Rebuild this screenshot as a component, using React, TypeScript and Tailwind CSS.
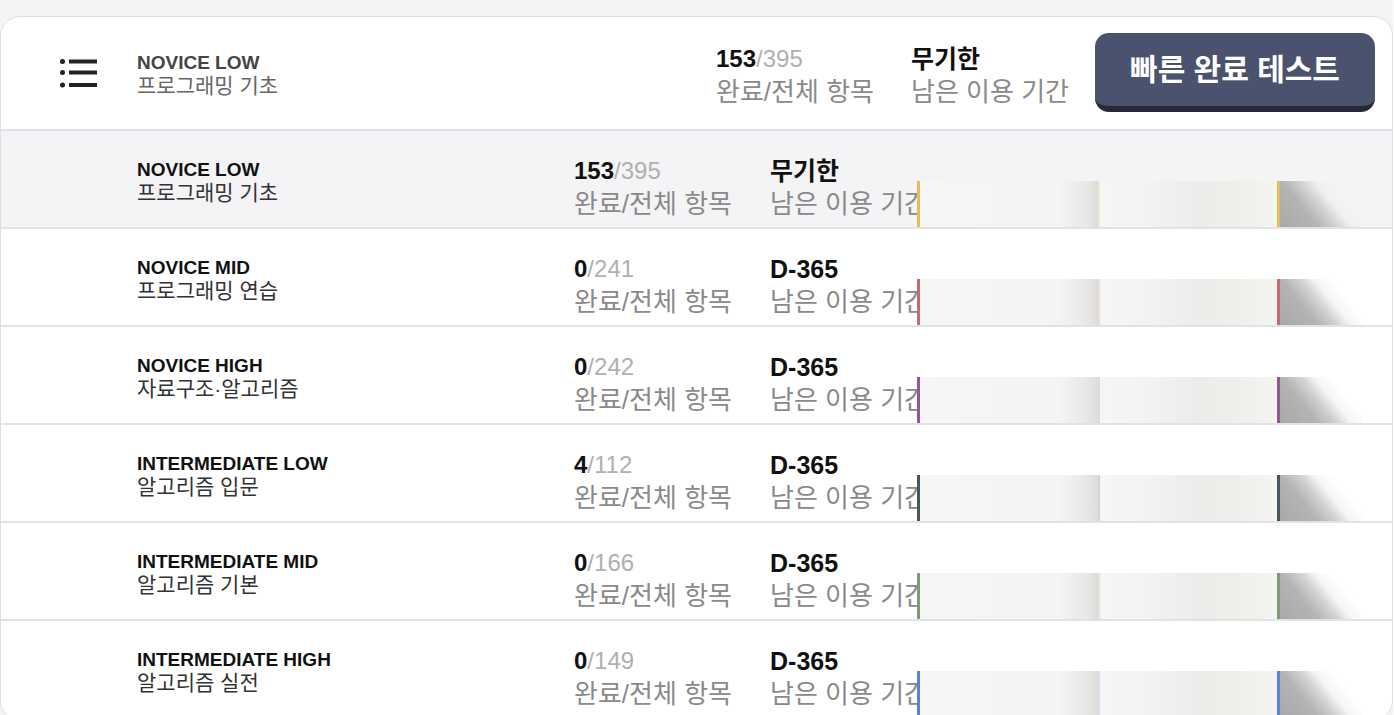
import React from "react"

interface Course {
  level: string
  title: string
  done: number
  total: number
  remain: string
  color: string
  active?: boolean
}

const courses: Course[] = [
  { level: "NOVICE LOW", title: "프로그래밍 기초", done: 153, total: 395, remain: "무기한", color: "#e2bd5c", active: true },
  { level: "NOVICE MID", title: "프로그래밍 연습", done: 0, total: 241, remain: "D-365", color: "#c46a70" },
  { level: "NOVICE HIGH", title: "자료구조·알고리즘", done: 0, total: 242, remain: "D-365", color: "#8a5a92" },
  { level: "INTERMEDIATE LOW", title: "알고리즘 입문", done: 4, total: 112, remain: "D-365", color: "#46575d" },
  { level: "INTERMEDIATE MID", title: "알고리즘 기본", done: 0, total: 166, remain: "D-365", color: "#7f9a74" },
  { level: "INTERMEDIATE HIGH", title: "알고리즘 실전", done: 0, total: 149, remain: "D-365", color: "#5d7fd6" },
]

const font = { fontFamily: '"Liberation Sans", "Noto Sans CJK KR", sans-serif' }

function MenuIcon() {
  return (
    <svg width="38" height="30" viewBox="0 0 38 30" className="shrink-0">
      <circle cx="2.5" cy="3.5" r="2.5" fill="#222" />
      <circle cx="2.5" cy="14.5" r="2.5" fill="#222" />
      <circle cx="2.5" cy="27" r="2.5" fill="#222" />
      <rect x="9" y="1.5" width="28" height="4" fill="#222" />
      <rect x="9" y="12.5" width="28" height="4" fill="#222" />
      <rect x="9" y="25" width="28" height="4" fill="#222" />
    </svg>
  )
}

function Book({ color }: { color: string }) {
  return (
    <div className="absolute left-[916px] bottom-0 h-[46px] flex">
      <div className="w-[3px] h-full" style={{ backgroundColor: color }} />
      <div className="w-[178px] h-full bg-[linear-gradient(to_right,#f6f6f4_0%,#f4f4f2_78%,#e9e9e7_92%,#dcdcda_100%)]" />
      <div className="w-[2px] h-full" style={{ backgroundColor: color, opacity: 0.25 }} />
      <div className="w-[177px] h-full bg-[linear-gradient(to_right,#f6f6f4_0%,#f3f3f1_25%,#ececea_55%,#efefeb_80%,#f4f4f0_100%)]" />
      <div className="w-[3px] h-full" style={{ backgroundColor: color }} />
      <div className="w-[82px] h-full bg-[linear-gradient(51deg,#a8a8a8_0%,#b4b4b4_32%,#d2d2d2_48%,rgba(236,236,236,0.5)_60%,rgba(255,255,255,0)_75%)]" />
    </div>
  )
}

function Stat({ top, label, bold }: { top: React.ReactNode; label: string; bold?: boolean }) {
  return (
    <div className="flex flex-col">
      <div className={`leading-[28px] text-[#111] ${bold ? "text-[25px] font-bold" : "text-[24px]"}`}>{top}</div>
      <div className="mt-[5px] text-[26px] leading-[28px] text-[#8a8a8a]">{label}</div>
    </div>
  )
}

function Progress({ done, total }: { done: number; total: number }) {
  return (
    <>
      <span className="font-bold">{done}</span>
      <span className="text-[#b0b0b0]">/{total}</span>
    </>
  )
}

export default function App() {
  const current = courses[0]
  return (
    <div className="min-h-screen bg-[#f4f4f6] pt-4 mr-px" style={font}>
      <div className="bg-white border border-[#dedee3] rounded-[20px] overflow-hidden">
        <div className="h-[114px] flex items-center pl-[59px] pr-[17px] border-b-2 border-[#e2e2e6]">
          <MenuIcon />
          <div className="ml-[39px] mt-[2px] flex flex-col">
            <div className="text-[19px] leading-[22px] font-bold text-[#444]">{current.level}</div>
            <div className="text-[21px] leading-[23px] text-[#666]">{current.title}</div>
          </div>
          <div className="ml-auto w-[195px] pt-[5px]">
            <Stat top={<Progress done={current.done} total={current.total} />} label="완료/전체 항목" />
          </div>
          <div className="w-[184px] pt-[5px]">
            <Stat top={current.remain} label="남은 이용 기간" bold />
          </div>
          <button className="w-[280px] h-[79px] mb-[1px] rounded-[14px] bg-[#4a526e] border-b-[6px] border-[#262a36] text-white text-[30px] font-bold">
            빠른 완료 테스트
          </button>
        </div>
        {courses.map((c) => (
          <div
            key={c.level}
            className={`relative h-[98px] flex items-start pt-[26px] pl-[136px] border-b-2 border-[#e2e2e6] ${c.active ? "bg-[#f4f4f6]" : "bg-white"}`}
          >
            <div className="w-[437px] mt-[2px] flex flex-col">
              <div className="text-[19px] leading-[22px] font-bold text-[#111]">{c.level}</div>
              <div className="text-[21px] leading-[23px] text-[#333]">{c.title}</div>
            </div>
            <div className="w-[196px]">
              <Stat top={<Progress done={c.done} total={c.total} />} label="완료/전체 항목" />
            </div>
            <div>
              <Stat top={c.remain} label="남은 이용 기간" bold />
            </div>
            <Book color={c.color} />
          </div>
        ))}
      </div>
    </div>
  )
}
